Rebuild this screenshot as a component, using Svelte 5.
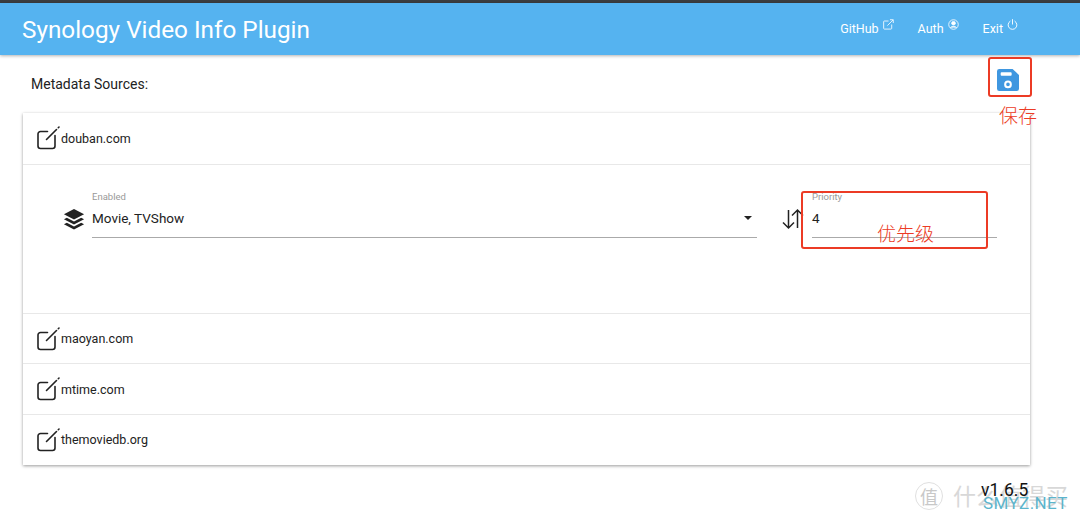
<script>
  const sources = ['maoyan.com', 'mtime.com', 'themoviedb.org']
</script>

{#snippet editIcon()}
  <svg class="edit" viewBox="0 0 24 24" width="24" height="24" fill="none" stroke="#222" stroke-width="1.6" stroke-linecap="round" stroke-linejoin="round">
    <path d="M11.5 5.5H4.5a2.5 2.5 0 0 0-2.5 2.5v12a2.5 2.5 0 0 0 2.5 2.5h12a2.5 2.5 0 0 0 2.5-2.5V9.5" />
    <path d="M10.5 13.5 20.5 3.5" />
    <path d="M22.3 1.7 23 1" />
  </svg>
{/snippet}

<div class="topline"></div>
<header>
  <h1>Synology Video Info Plugin</h1>
  <nav>
    <span class="link">GitHub
      <svg viewBox="0 0 12 12" width="11" height="11" fill="none" stroke="currentColor" stroke-width="0.9">
        <path d="M6 2.2H1.5a.8.8 0 0 0-.8.8v7.2c0 .4.4.8.8.8h7.2c.4 0 .8-.4.8-.8V6" />
        <path d="M4.8 7.2 11 1M7.6.8h3.6v3.6" />
      </svg>
    </span>
    <span class="link">Auth
      <svg viewBox="0 0 12 12" width="11" height="11" fill="none" stroke="currentColor" stroke-width="0.9">
        <circle cx="6" cy="6" r="5.2" />
        <circle cx="6" cy="4.6" r="2" fill="currentColor" />
        <path d="M2.6 9.4C3.4 7.8 8.6 7.8 9.4 9.4" fill="currentColor" />
      </svg>
    </span>
    <span class="link">Exit
      <svg viewBox="0 0 12 12" width="11" height="11" fill="none" stroke="currentColor" stroke-width="1" stroke-linecap="round">
        <path d="M3.4 2.4a4.8 4.8 0 1 0 5.2 0" />
        <path d="M6 .6v5" />
      </svg>
    </span>
  </nav>
</header>

<main>
  <div class="heading">
    <span>Metadata Sources:</span>
    <div class="save">
      <svg viewBox="0 0 24 24" width="22" height="22">
        <path fill="#3f97e0" fill-rule="evenodd" d="M2.5 0H17l7 6.5V21.5a2.5 2.5 0 0 1-2.5 2.5h-19A2.5 2.5 0 0 1 0 21.5v-19A2.5 2.5 0 0 1 2.5 0ZM5 3.6a1 1 0 0 0-1 1v1.8a1 1 0 0 0 1 1h10a1 1 0 0 0 1-1V4.6a1 1 0 0 0-1-1ZM12 12.6a4.2 4.2 0 1 0 0 8.4 4.2 4.2 0 0 0 0-8.4Zm0 2.2a2 2 0 1 1 0 4 2 2 0 0 1 0-4Z" />
      </svg>
      <div class="note-box save-box"></div>
      <div class="note save-note">保存</div>
    </div>
  </div>

  <section class="card">
    <div class="row">
      {@render editIcon()}
      <span>douban.com</span>
    </div>
    <div class="panel">
      <svg class="layers" viewBox="0 0 24 24" width="22" height="22" fill="#222">
        <path d="M12 1 23 6.8 12 12.6 1 6.8Z" />
        <path d="M4.2 10.6 12 14.8 19.8 10.6 23 12.2 12 18 1 12.2Z" />
        <path d="M4.2 16 12 20.2 19.8 16 23 17.6 12 23.4 1 17.6Z" />
      </svg>
      <div class="field enabled">
        <label for="enabled">Enabled</label>
        <div class="control" id="enabled">
          <span>Movie, TVShow</span>
          <i class="caret"></i>
        </div>
      </div>
      <svg class="sort" viewBox="0 0 24 22" width="24" height="22" fill="none" stroke="#222" stroke-width="1.5">
        <path d="M7.5 2v18M2 14.5 7.5 20 13 14.5" />
        <path d="M16.5 20V2M11 7.5 16.5 2 22 7.5" />
      </svg>
      <div class="field priority">
        <label for="priority">Priority</label>
        <div class="control" id="priority"><span>4</span></div>
        <div class="note-box priority-box"></div>
        <div class="note priority-note">优先级</div>
      </div>
    </div>
    {#each sources as source}
      <div class="row">
        {@render editIcon()}
        <span>{source}</span>
      </div>
    {/each}
  </section>

  <footer>
    <span class="wm-mark">值</span>
    <span class="wm-text">什么值得买</span>
    <span class="version">v1.6.5</span>
    <span class="wm-site">SMYZ.NET</span>
  </footer>
</main>

<style>
  :global(body) {
    margin: 0;
    background: #fff;
    font-family: Roboto, "Noto Sans CJK SC", sans-serif;
    color: #222;
    overflow: hidden;
  }

  .topline {
    height: 3px;
    background: #3a3d40;
  }

  header {
    height: 52px;
    background: #55b3f0;
    box-shadow: 0 1px 3px rgba(0, 0, 0, 0.3);
    display: flex;
    align-items: center;
    justify-content: space-between;
    padding: 0 62px 0 22px;
    color: #fff;
    position: relative;
  }

  h1 {
    margin: 0;
    font-size: 24.3px;
    font-weight: 400;
  }

  nav {
    display: flex;
    gap: 24px;
    font-size: 12.5px;
    margin-top: -1px;
  }

  .link {
    display: flex;
    align-items: flex-start;
    gap: 4px;
  }

  .link svg {
    margin-top: -2px;
  }

  main {
    padding: 0 50px 0 23px;
  }

  .heading {
    height: 58px;
    display: flex;
    align-items: center;
    justify-content: space-between;
    padding: 0 11px 0 8px;
    box-sizing: border-box;
    font-size: 14px;
  }

  .save {
    position: relative;
    display: flex;
    transform: translate(0, -4px);
  }

  .card {
    box-shadow: 0 1px 3px rgba(0, 0, 0, 0.4);
  }

  .row {
    height: 50.7px;
    display: flex;
    align-items: center;
    gap: 1px;
    padding: 0 13px;
    font-size: 12.5px;
    border-top: 1px solid #e8e8e8;
    box-sizing: border-box;
  }

  .row:first-child {
    border-top: 0;
  }

  .edit {
    flex: none;
  }

  .panel {
    height: 149px;
    border-top: 1px solid #e8e8e8;
    display: flex;
    padding: 26px 33px 0 40px;
    box-sizing: border-box;
    align-items: flex-start;
  }

  .layers {
    margin: 17px 7px 0 0;
    flex: none;
  }

  .field {
    position: relative;
    flex: none;
  }

  .enabled {
    flex: 1;
  }

  .priority {
    width: 185px;
  }

  label {
    display: block;
    font-size: 9.5px;
    line-height: 12px;
    color: #999;
  }

  .control {
    height: 35px;
    padding-bottom: 3px;
    display: flex;
    align-items: center;
    justify-content: space-between;
    border-bottom: 1px solid #aaa;
    font-size: 13.5px;
    padding-right: 5px;
    box-sizing: border-box;
  }

  .caret {
    border: 4px solid transparent;
    border-top: 4px solid #222;
    border-bottom: 0;
  }

  .sort {
    margin: 17px 7px 0 24px;
    flex: none;
  }

  .note-box {
    position: absolute;
    border: 2px solid #ec3b25;
    border-radius: 3px;
    box-sizing: border-box;
  }

  .note {
    position: absolute;
    color: #ec3b25;
    font-size: 19px;
    white-space: nowrap;
    font-family: "Noto Sans CJK SC", sans-serif;
    font-weight: 300;
  }

  .save-box {
    left: -9px;
    top: -12px;
    width: 44px;
    height: 40px;
  }

  .save-note {
    left: 2px;
    top: 32px;
  }

  .priority-box {
    left: -11px;
    top: 0;
    width: 187px;
    height: 58px;
  }

  .priority-note {
    left: 65px;
    top: 28px;
  }

  footer {
    position: relative;
    height: 50px;
  }

  footer span {
    position: absolute;
    white-space: nowrap;
  }

  .wm-mark {
    left: 892px;
    top: 17px;
    width: 26px;
    height: 26px;
    border: 1px solid #e0e0e0;
    border-radius: 50%;
    text-align: center;
    line-height: 26px;
    font-size: 18px;
    color: #c8c8c8;
    font-family: "Noto Sans CJK SC", sans-serif;
  }

  .wm-text {
    left: 930px;
    top: 13px;
    font-size: 23px;
    color: #d8d8d8;
    font-family: "Noto Sans CJK SC", sans-serif;
  }

  .version {
    left: 958px;
    top: 15px;
    font-size: 17.5px;
    color: #111;
  }

  .wm-site {
    left: 960px;
    top: 28px;
    font-size: 17px;
    color: #5bb4cc;
    letter-spacing: 0.4px;
  }
</style>
